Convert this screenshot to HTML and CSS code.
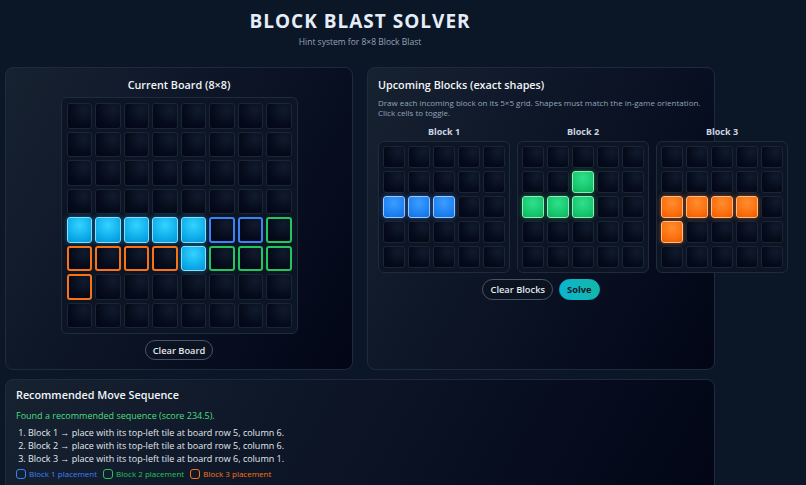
FILE: index.html
```html
<!DOCTYPE html>
<html lang="en">
<head>
    <meta charset="UTF-8">
    <meta name="viewport" content="width=device-width, initial-scale=1.0">
    <title>Block Blast Solver</title>
    <link rel="stylesheet" href="styles.css">
</head>
<body>
    <div class="app">
        <header class="header">
            <h1>BLOCK BLAST SOLVER</h1>
            <p class="subtitle">Hint system for 8×8 Block Blast</p>
        </header>

        <div class="top-row">
            <!-- board -->
            <section class="panel board-panel">
                <h2 class="panel-title">Current Board (8×8)</h2>
                <div class="board" id="board"></div>
                <button class="btn">Clear Board</button>
            </section>

            <!-- upcoming blocks -->
            <section class="panel blocks-panel">
                <h2 class="panel-title left">Upcoming Blocks (exact shapes)</h2>
                <p class="desc">Draw each incoming block on its 5×5 grid. Shapes must match the in-game orientation. Click cells to toggle.</p>
                <div class="blocks">
                    <div class="block">
                        <div class="block-label">Block 1</div>
                        <div class="piece" data-color="blue" data-cells="10,11,12"></div>
                    </div>
                    <div class="block">
                        <div class="block-label">Block 2</div>
                        <div class="piece" data-color="green" data-cells="7,10,11,12"></div>
                    </div>
                    <div class="block">
                        <div class="block-label">Block 3</div>
                        <div class="piece" data-color="orange" data-cells="10,11,12,13,15"></div>
                    </div>
                </div>
                <div class="actions">
                    <button class="btn">Clear Blocks</button>
                    <button class="btn solve">Solve</button>
                </div>
            </section>
        </div>

        <section class="panel result-panel">
            <h2 class="panel-title left">Recommended Move Sequence</h2>
            <p class="found">Found a recommended sequence (score 234.5).</p>
            <ol class="moves">
                <li>Block 1 → place with its top-left tile at board row 5, column 6.</li>
                <li>Block 2 → place with its top-left tile at board row 5, column 6.</li>
                <li>Block 3 → place with its top-left tile at board row 6, column 1.</li>
            </ol>
            <div class="legend">
                <span class="key blue"><i></i>Block 1 placement</span>
                <span class="key green"><i></i>Block 2 placement</span>
                <span class="key orange"><i></i>Block 3 placement</span>
            </div>
        </section>
    </div>

    <script>
        // board: filled cells + placement outlines (row, col are 1-based)
        const filled = ["5,1", "5,2", "5,3", "5,4", "5,5", "6,5"];
        const outlines = {
            "5,6": "o-blue", "5,7": "o-blue", "5,8": "o-green",
            "6,6": "o-green", "6,7": "o-green", "6,8": "o-green",
            "6,1": "o-orange", "6,2": "o-orange", "6,3": "o-orange", "6,4": "o-orange",
            "7,1": "o-orange"
        };

        const board = document.getElementById("board");
        for (let r = 1; r <= 8; r++) {
            for (let c = 1; c <= 8; c++) {
                const cell = document.createElement("div");
                const key = r + "," + c;
                cell.className = "cell";
                if (filled.includes(key)) cell.classList.add("f-cyan");
                if (outlines[key]) cell.classList.add(outlines[key]);
                board.appendChild(cell);
            }
        }

        document.querySelectorAll(".piece").forEach(piece => {
            const on = piece.dataset.cells.split(",").map(Number);
            for (let i = 0; i < 25; i++) {
                const cell = document.createElement("div");
                cell.className = "cell";
                if (on.includes(i)) cell.classList.add("f-" + piece.dataset.color);
                cell.addEventListener("click", () => cell.classList.toggle("f-" + piece.dataset.color));
                piece.appendChild(cell);
            }
        });
    </script>
</body>
</html>
```

FILE: styles.css
```css
body {
    margin: 0;
    background: #0b1627;
    color: #e2e8f0;
    font-family: "Open Sans", "Noto Sans", sans-serif;
    height: 485px;
    overflow: hidden;
}
.app {
    width: 710px;
    margin-left: 5px;
}
.header {
    text-align: center;
    padding-top: 9px;
}
h1 {
    margin: 0;
    font-size: 19px;
    font-weight: 700;
    letter-spacing: 1px;
    color: #e5edf7;
    line-height: 24px;
}
.subtitle {
    margin: 3px 0 0;
    font-size: 8.5px;
    color: #94a3b8;
    line-height: 12px;
}
.top-row {
    display: grid;
    grid-template-columns: 348px 348px;
    gap: 14px;
    margin-top: 19px;
}
.panel {
    box-sizing: border-box;
    border: 1px solid #1f2b3d;
    border-radius: 8px;
    background: linear-gradient(120deg, #172231 0%, #0a1223 55%, #020617 100%);
    padding: 9px 10px 9px;
}
.board-panel {
    display: flex;
    flex-direction: column;
    align-items: center;
    height: 303px;
}
.panel-title {
    margin: 0;
    font-size: 10.8px;
    font-weight: 600;
    color: #f1f5f9;
    line-height: 16px;
}
.panel-title.left {
    text-align: left;
}
.board {
    box-sizing: border-box;
    width: 237px;
    margin-top: 4px;
    padding: 5px;
    border: 1px solid #1f2a3b;
    border-radius: 6px;
    background: #0c1524;
    display: grid;
    grid-template-columns: repeat(8, 1fr);
    gap: 3px;
}
.board .cell {
    aspect-ratio: 1;
}
.cell {
    box-sizing: border-box;
    border: 1px solid #1b2535;
    border-radius: 3px;
    background: radial-gradient(circle at 70% 25%, #111b2e 0%, #050b1a 60%, #020617 100%);
}
.f-cyan {
    background: radial-gradient(circle at 50% 30%, #35d3ff 0%, #0aa9e8 70%, #0794d2 100%);
    border-color: #8ddcfb;
    box-shadow: 0 0 5px rgba(14, 165, 233, 0.55);
}
.f-blue {
    background: radial-gradient(circle at 50% 30%, #3c9dff 0%, #1b7ff0 70%, #126ee0 100%);
    border-color: #9cc8ff;
    box-shadow: 0 0 5px rgba(59, 130, 246, 0.55);
}
.f-green {
    background: radial-gradient(circle at 50% 30%, #2fe08c 0%, #15c56c 70%, #0fae5c 100%);
    border-color: #8cf0b8;
    box-shadow: 0 0 5px rgba(34, 197, 94, 0.5);
}
.f-orange {
    background: radial-gradient(circle at 50% 30%, #ff8e2e 0%, #fb6b0b 70%, #ea5a04 100%);
    border-color: #fdbd85;
    box-shadow: 0 0 5px rgba(249, 115, 22, 0.55);
}
.o-blue {
    border: 2px solid #3b82f6;
}
.o-green {
    border: 2px solid #22c55e;
}
.o-orange {
    border: 2px solid #f97316;
}
.btn {
    font-family: inherit;
    font-size: 9.3px;
    font-weight: 600;
    color: #e2e8f0;
    background: #0b1220;
    border: 1px solid #475569;
    border-radius: 999px;
    padding: 0 7px;
    height: 21px;
    cursor: pointer;
}
.board-panel .btn {
    margin-top: 6px;
}
.btn.solve {
    background: linear-gradient(90deg, #0bb5cf, #14b8a6);
    border-color: #0bb5cf;
    color: #0f172a;
    font-weight: 700;
}
.blocks-panel {
    height: 303px;
}
.desc {
    margin: 5px 0 0;
    font-size: 8px;
    line-height: 10px;
    color: #94a3b8;
}
.blocks {
    display: flex;
    gap: 7px;
    margin-top: 8px;
}
.block {
    display: flex;
    flex-direction: column;
    align-items: center;
    flex-shrink: 0;
}
.block-label {
    font-size: 9px;
    font-weight: 700;
    color: #cbd5e1;
    line-height: 12px;
    margin-bottom: 3px;
}
.piece {
    box-sizing: border-box;
    padding: 4px;
    border: 1px solid #1f2a3b;
    border-radius: 6px;
    background: #0c1524;
    display: grid;
    grid-template-columns: repeat(5, 22px);
    grid-auto-rows: 22px;
    gap: 3px;
}
.actions {
    display: flex;
    justify-content: center;
    gap: 6px;
    margin-top: 6px;
}
.result-panel {
    margin-top: 9px;
    height: 120px;
    padding: 7px 10px;
}
.found {
    margin: 6px 0 0;
    font-size: 9px;
    color: #4ade80;
    line-height: 13px;
}
.moves {
    margin: 4px 0 0;
    padding-left: 12px;
    font-size: 9px;
    line-height: 13px;
    color: #e2e8f0;
}
.legend {
    display: flex;
    gap: 6px;
    margin-top: 3px;
    font-size: 8px;
    line-height: 11px;
}
.key {
    display: flex;
    align-items: center;
    gap: 3px;
}
.key i {
    display: inline-block;
    width: 8px;
    height: 8px;
    border: 1px solid currentColor;
    border-radius: 3px;
}
.key.blue { color: #3b82f6; }
.key.green { color: #22c55e; }
.key.orange { color: #f97316; }
```
